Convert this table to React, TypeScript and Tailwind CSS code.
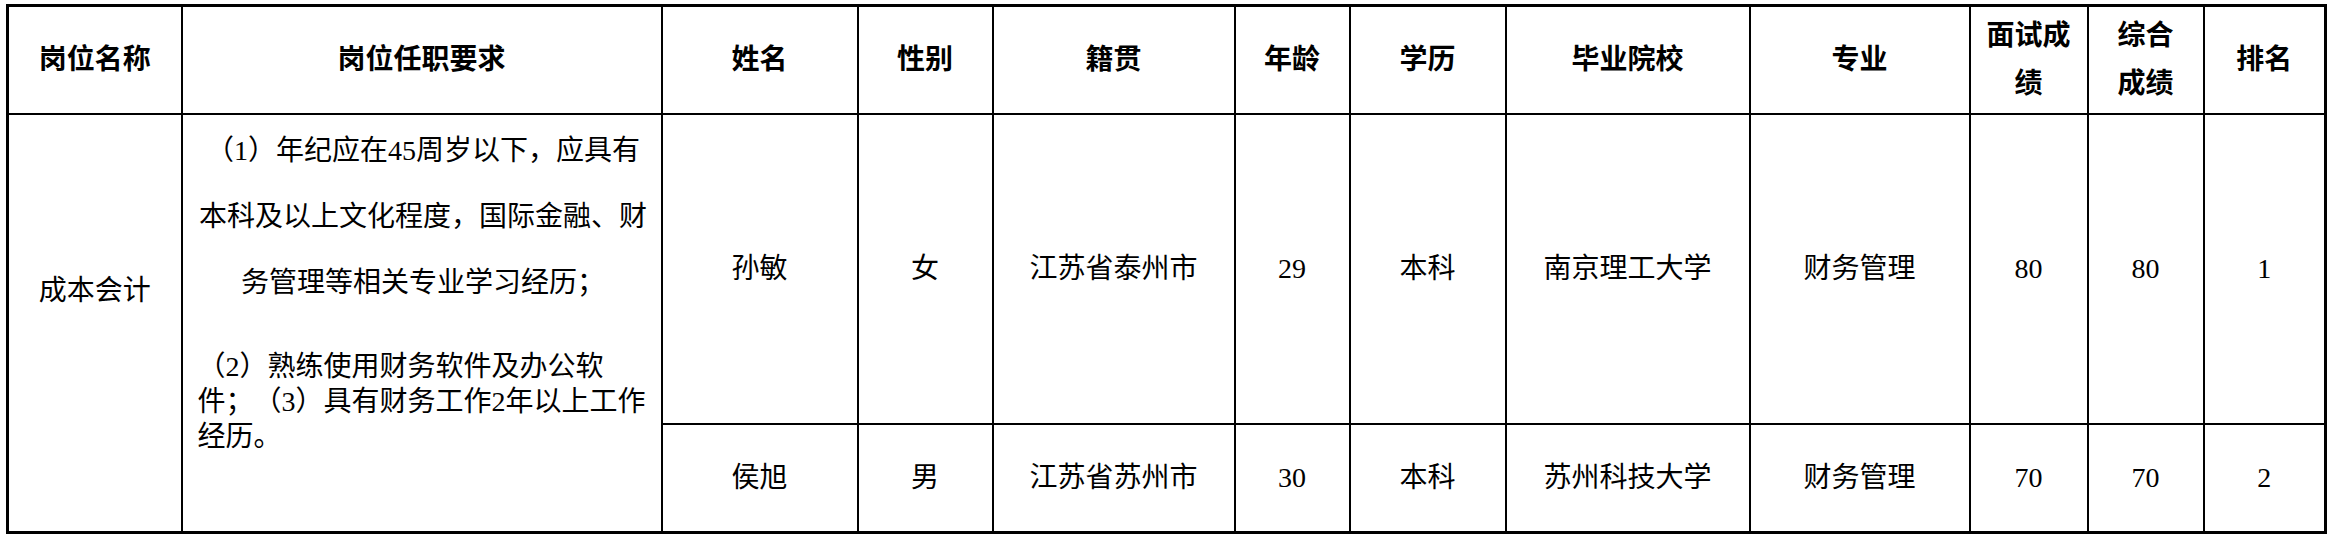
import React from "react";

const cols = [
  "w-[174px]",
  "w-[480px]",
  "w-[196px]",
  "w-[135px]",
  "w-[242px]",
  "w-[115px]",
  "w-[156px]",
  "w-[244px]",
  "w-[220px]",
  "w-[118px]",
  "w-[116px]",
  "w-[122px]",
];

const th = "border-2 border-black p-0 text-center align-middle font-bold";
const td = "border-2 border-black p-0 text-center align-middle font-normal";

const rows = [
  ["孙敏", "女", "江苏省泰州市", "29", "本科", "南京理工大学", "财务管理", "80", "80", "1"],
  ["侯旭", "男", "江苏省苏州市", "30", "本科", "苏州科技大学", "财务管理", "70", "70", "2"],
];

export default function App() {
  return (
    <div className="w-[2335px] h-[541px] bg-white pl-[6px] pt-[4px]">
      <table className="table-fixed border-collapse border-[3px] border-black w-[2319px] text-black text-[28px] leading-[35px] [text-spacing-trim:space-all] font-['Liberation_Serif','Noto_Sans_CJK_SC',serif]">
        <colgroup>
          {cols.map((c, i) => (
            <col key={i} className={c} />
          ))}
        </colgroup>
        <thead>
          <tr className="h-[108px]">
            <th className={th}>岗位名称</th>
            <th className={th}>岗位任职要求</th>
            <th className={th}>姓名</th>
            <th className={th}>性别</th>
            <th className={th}>籍贯</th>
            <th className={th}>年龄</th>
            <th className={th}>学历</th>
            <th className={th}>毕业院校</th>
            <th className={th}>专业</th>
            <th className={`${th} leading-[48px]`}>
              面试成
              <br />
              绩
            </th>
            <th className={`${th} leading-[48px]`}>
              综合
              <br />
              成绩
            </th>
            <th className={th}>排名</th>
          </tr>
        </thead>
        <tbody>
          <tr className="h-[310px]">
            <td rowSpan={2} className="border-2 border-black p-0 pt-[158px] text-center align-top font-normal">
              成本会计
            </td>
            <td rowSpan={2} className="border-2 border-black p-0 pt-[3px] pl-[15px] pr-[12px] align-top font-normal">
              <div className="text-center leading-[66px] whitespace-nowrap">
                <div>（1）年纪应在45周岁以下，应具有</div>
                <div>本科及以上文化程度，国际金融、财</div>
                <div>务管理等相关专业学习经历；</div>
              </div>
              <div className="mt-[33px] text-left leading-[35px] whitespace-nowrap">
                <div>（2）熟练使用财务软件及办公软</div>
                <div>件；（3）具有财务工作2年以上工作</div>
                <div>经历。</div>
              </div>
            </td>
            {rows[0].map((v, i) => (
              <td key={i} className={td}>
                {v}
              </td>
            ))}
          </tr>
          <tr className="h-[109px]">
            {rows[1].map((v, i) => (
              <td key={i} className={td}>
                {v}
              </td>
            ))}
          </tr>
        </tbody>
      </table>
    </div>
  );
}
